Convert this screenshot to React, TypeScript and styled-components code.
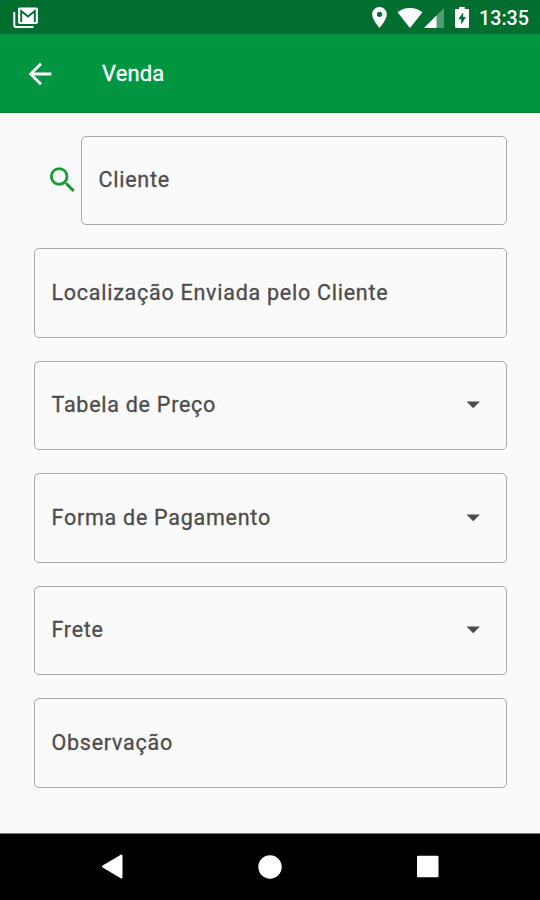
import React from "react";
import styled, { createGlobalStyle } from "styled-components";

const GlobalStyle = createGlobalStyle`
  *, *::before, *::after { box-sizing: border-box; }
  body { margin: 0; background: #fafafa; font-family: Roboto, sans-serif; }
`;

const Screen = styled.div`
  width: 540px;
  height: 900px;
  display: flex;
  flex-direction: column;
  overflow: hidden;
  background: #fafafa;
`;

const StatusBar = styled.header`
  height: 34px;
  flex: none;
  display: flex;
  align-items: center;
  padding: 1px 11px 0 13px;
  background: #006e2f;
  color: #fff;
`;

const StatusIcons = styled.div`
  display: flex;
  align-items: center;
  margin-left: auto;
`;

const Glyph = styled.svg<{ $gap?: number }>`
  display: block;
  flex: none;
  margin-left: ${(p) => p.$gap ?? 0}px;
`;

const Clock = styled.span`
  width: 50px;
  margin-left: 10.5px;
  padding-top: 2px;
  font-size: 19.7px;
  font-weight: 500;
  line-height: 24px;
`;

const AppBar = styled.div`
  height: 79px;
  flex: none;
  display: flex;
  align-items: center;
  padding: 1px 0 0 23px;
  background: #009641;
  border-bottom: 1px solid #078523;
  color: #fff;
`;

const Title = styled.h1`
  margin: 1px 0 0 45px;
  font-size: 22px;
  font-weight: 400;
  line-height: 28px;
  letter-spacing: 0.15px;
  -webkit-text-stroke: 0.3px currentColor;
`;

const Form = styled.main`
  flex: 1;
  display: flex;
  flex-direction: column;
  gap: 23px;
  padding: 22.5px 33.5px 0 34px;
`;

const SearchRow = styled.div`
  display: flex;
  align-items: center;
  padding-left: 11px;
`;

const Field = styled.div`
  flex: 1 1 auto;
  height: 89.5px;
  max-height: 89.5px;
  display: flex;
  align-items: center;
  justify-content: space-between;
  padding: 0 26px 0 16.5px;
  border: 1.5px solid #a9a9a9;
  border-radius: 5px;
`;

const Label = styled.span`
  font-size: 21.5px;
  font-weight: 400;
  line-height: 28px;
  letter-spacing: 0.74px;
  color: #4c4c4c;
  -webkit-text-stroke: 0.3px currentColor;
  white-space: nowrap;
`;

const NavBar = styled.nav`
  height: 67px;
  flex: none;
  display: flex;
  align-items: center;
  justify-content: space-between;
  padding: 0 101px 1px;
  background: #000;
  border-top: 1px solid #777;
`;

const fields = [
  { label: "Localização Enviada pelo Cliente", select: false },
  { label: "Tabela de Preço", select: true },
  { label: "Forma de Pagamento", select: true },
  { label: "Frete", select: true },
  { label: "Observação", select: false },
];

const MailStack = () => (
  <Glyph width="26" height="22" viewBox="0 0 26 22" fill="none">
    <path d="M1.300 5v13.200a1.800 1.800 0 0 0 1.800 1.800H20.500" stroke="#fff" strokeWidth="2" />
    <rect x="5" y="0.500" width="20" height="16.500" rx="1.800" fill="#fff" />
    <path d="M8.200 15V4l6.800 5.600L21.800 4v11" stroke="#006e2f" strokeWidth="1.900" />
  </Glyph>
);

const Pin = () => (
  <Glyph width="15" height="21" viewBox="5 2 14 20" fill="#fff">
    <path d="M12 2C8.130 2 5 5.130 5 9c0 5.250 7 13 7 13s7-7.750 7-13c0-3.870-3.130-7-7-7zm0 9.500A2.500 2.500 0 1 1 12 6.500a2.500 2.500 0 0 1 0 5z" />
  </Glyph>
);

const Wifi = () => (
  <Glyph $gap={9.500} width="26" height="20" viewBox="0 0 26 20" fill="#fff">
    <path d="M13 20 .5 4.300C4 1.500 8.200 0 13 0s9 1.500 12.500 4.300z" />
  </Glyph>
);

const Signal = () => (
  <Glyph $gap={1} width="20" height="20" viewBox="0 0 20 20" fill="#fff">
    <path d="M0 20 20 0v20z" opacity=".32" />
    <path d="M0 20 12.500 7.500V20z" />
  </Glyph>
);

const Battery = () => (
  <Glyph $gap={11} width="14" height="21" viewBox="0 0 14 21">
    <path d="M1.200 2.100h3V0h5.600v2.100h3c.7 0 1.200.5 1.200 1.200v16.500c0 .7-.5 1.200-1.200 1.200H1.200C.5 21 0 20.500 0 19.800V3.300c0-.7.5-1.200 1.200-1.200z" fill="#fff" />
    <path d="M8.200 5.200 3.300 12.300h2.900v5.400l4.700-7.700H8.200z" fill="#006e2f" />
  </Glyph>
);

const BackArrow = () => (
  <Glyph width="34" height="34" viewBox="0 0 24 24" fill="#fff">
    <path d="M20 11H7.830l5.590-5.590L12 4l-8 8 8 8 1.410-1.410L7.830 13H20v-2z" />
  </Glyph>
);

const Search = () => (
  <Glyph width="36" height="34" viewBox="0.200 0 24 24" fill="#139b36">
    <path d="M15.500 14h-.79l-.28-.27A6.471 6.471 0 0 0 16 9.500 6.500 6.500 0 1 0 9.500 16c1.610 0 3.090-.59 4.230-1.570l.27.28v.79l5 4.990L20.490 19l-4.990-5zm-6 0C7.010 14 5 11.990 5 9.500S7.010 5 9.500 5 14 7.010 14 9.500 11.990 14 9.500 14z" />
  </Glyph>
);

const Caret = () => (
  <Glyph width="14" height="8" viewBox="0 0 14 8" fill="#4d4d4d">
    <path d="M.5 .5h13.400L7.200 7.200z" />
  </Glyph>
);

export default function App() {
  return (
    <>
      <GlobalStyle />
      <Screen>
        <StatusBar>
          <MailStack />
          <StatusIcons>
            <Pin />
            <Wifi />
            <Signal />
            <Battery />
            <Clock>13:35</Clock>
          </StatusIcons>
        </StatusBar>
        <AppBar>
          <BackArrow />
          <Title>Venda</Title>
        </AppBar>
        <Form>
          <SearchRow>
            <Search />
            <Field>
              <Label>Cliente</Label>
            </Field>
          </SearchRow>
          {fields.map((field) => (
            <Field key={field.label}>
              <Label>{field.label}</Label>
              {field.select && <Caret />}
            </Field>
          ))}
        </Form>
        <NavBar>
          <Glyph width="23" height="25" viewBox="0 0 23 25" fill="#fff">
            <path d="M1.600 11.600 19.800.8Q21.500 0 21.500 2v21q0 2-1.700 1.200L1.600 13.400q-1.500-.9 0-1.800z" />
          </Glyph>
          <Glyph width="24" height="24" viewBox="0 0 24 24" fill="#fff">
            <circle cx="12" cy="12" r="11.700" />
          </Glyph>
          <Glyph width="23" height="23" viewBox="0 0 23 23" fill="#fff">
            <rect x="1" y=".8" width="21.500" height="21.500" rx="1" />
          </Glyph>
        </NavBar>
      </Screen>
    </>
  );
}
